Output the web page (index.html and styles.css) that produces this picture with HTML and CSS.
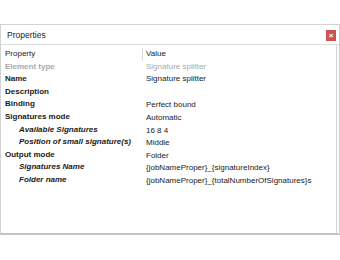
FILE: index.html
```html
<!DOCTYPE html>
<html lang="en">
<head>
    <meta charset="UTF-8">
    <meta name="viewport" content="width=device-width, initial-scale=1.0">
    <title>Properties</title>
    <link rel="stylesheet" href="styles.css">
</head>
<body>
    <div class="dialog">
        <div class="dialog-header">
            <div class="dialog-title">Properties</div>
            <div class="close-btn">&times;</div>
        </div>
        <div class="grid">
            <div class="row head">
                <div class="label">Property</div>
                <div class="value">Value</div>
            </div>
            <div class="row disabled">
                <div class="label bold">Element type</div>
                <div class="value">Signature splitter</div>
            </div>
            <div class="row">
                <div class="label bold">Name</div>
                <div class="value">Signature splitter</div>
            </div>
            <div class="row">
                <div class="label bold">Description</div>
                <div class="value"></div>
            </div>
            <div class="row">
                <div class="label bold">Binding</div>
                <div class="value low">Perfect bound</div>
            </div>
            <div class="row">
                <div class="label bold">Signatures mode</div>
                <div class="value low">Automatic</div>
            </div>
            <div class="row">
                <div class="label sub">Available Signatures</div>
                <div class="value low">16 8 4</div>
            </div>
            <div class="row">
                <div class="label sub">Position of small signature(s)</div>
                <div class="value low">Middle</div>
            </div>
            <div class="row">
                <div class="label bold">Output mode</div>
                <div class="value low">Folder</div>
            </div>
            <div class="row">
                <div class="label sub">Signatures Name</div>
                <div class="value low">{jobNameProper}_{signatureIndex}</div>
            </div>
            <div class="row">
                <div class="label sub">Folder name</div>
                <div class="value low">{jobNameProper}_{totalNumberOfSignatures}s</div>
            </div>
        </div>
    </div>
</body>
</html>
```

FILE: styles.css
```css
body {
    font-family: "Liberation Sans", Arial, sans-serif;
    font-size: 8px;
    margin: 0;
    padding: 24px 0 0 0;
    background-color: #fff;
    color: #1a1a1a;
}
.dialog {
    width: 338px;
    height: 208px;
    border: 1px solid #d2d2d2;
    border-bottom: 2px solid #c4c4c4;
    background: #fff;
    display: flex;
    flex-direction: column;
}
.dialog-header {
    height: 19px;
    border-bottom: 1px solid #dcdcdc;
    display: flex;
    align-items: center;
    justify-content: space-between;
    padding: 0 3px 0 6px;
}
.dialog-title {
    font-size: 8.5px;
    color: #222;
}
.close-btn {
    width: 10px;
    height: 11px;
    margin-top: 2px;
    background: #cd5452;
    color: #fff;
    font-size: 8px;
    font-weight: bold;
    line-height: 11px;
    text-align: center;
}
.grid {
    flex: 1;
    padding-top: 3px;
    border-right: 1px solid #d6d6d6;
    margin-right: 2px;
}
.row {
    display: grid;
    grid-template-columns: 142px 1fr;
    height: 12.6px;
    line-height: 12.6px;
    white-space: nowrap;
}
.label {
    padding-left: 4px;
    overflow: hidden;
}
.value {
    padding-left: 3px;
}
.head .label {
    border-right: 1px solid #d8d8d8;
}
.bold {
    font-weight: bold;
}
.sub {
    font-weight: bold;
    font-style: italic;
    padding-left: 18px;
}
.disabled {
    color: #a8a8a8;
}
.low {
    padding-top: 1px;
}
```
